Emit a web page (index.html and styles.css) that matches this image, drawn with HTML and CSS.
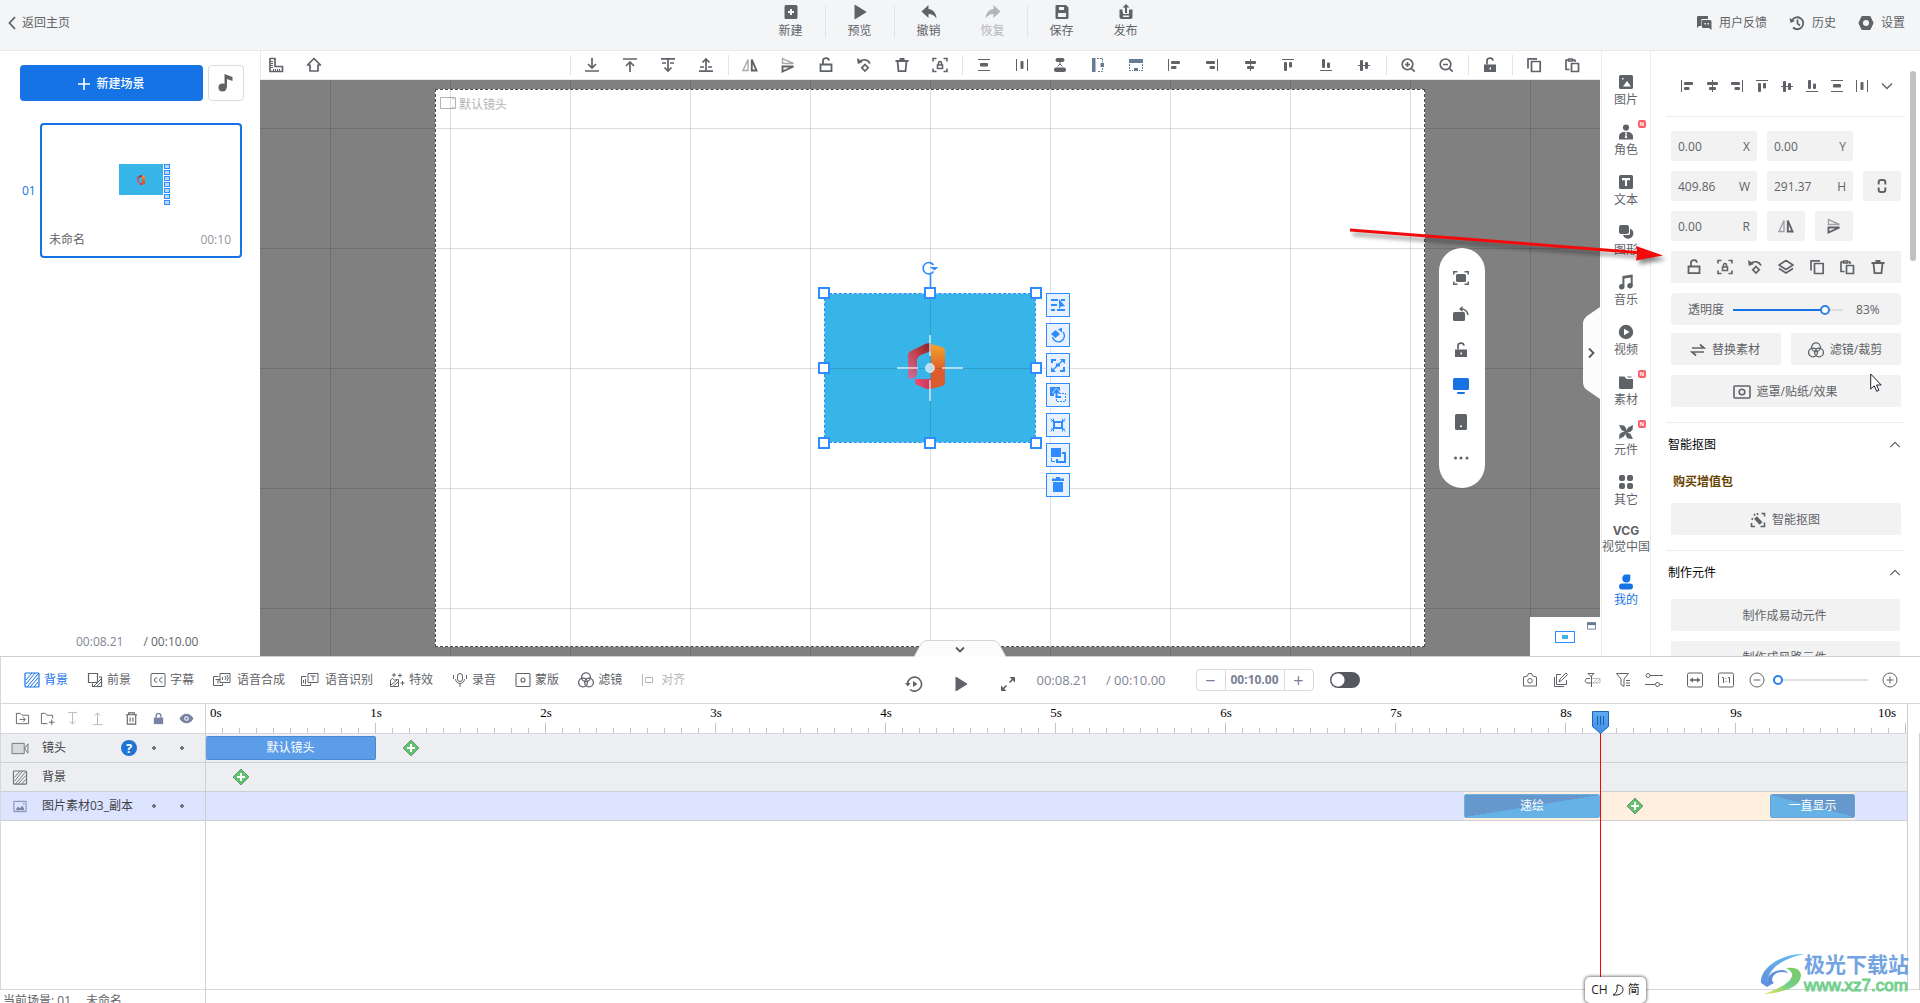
FILE: index.html
```html
<!DOCTYPE html>
<html lang="zh-CN">
<head>
<meta charset="utf-8">
<title>未命名</title>
<link rel="stylesheet" href="styles.css">
</head>
<body>
<svg class="sprite" aria-hidden="true">
  <symbol id="plusbox" viewBox="0 0 16 16"><path fill="currentColor" fill-rule="evenodd" d="M3 1h10a1.500 1.500 0 0 1 1.500 1.500v11A1.500 1.500 0 0 1 13 15H3a1.500 1.500 0 0 1-1.500-1.500v-11A1.500 1.500 0 0 1 3 1zm4 4v2H5v2h2v2h2V9h2V7H9V5z"/></symbol>
  <symbol id="play" viewBox="0 0 16 16"><path fill="currentColor" d="M2.500 1.500v13q0 1 1 .5l10.500-6.500q.6-.5 0-1L3.500 1q-1-.5-1 .5z"/></symbol>
  <symbol id="undo" viewBox="0 0 16 16"><path fill="currentColor" d="M7.500 1v4c5 .5 7.500 4 8 9.500-2-3-4.500-4.500-8-4.500v4L.5 7.500z"/></symbol>
  <symbol id="redo" viewBox="0 0 16 16"><path fill="currentColor" d="M8.500 1v4c-5 .5-7.500 4-8 9.500 2-3 4.500-4.500 8-4.500v4l7-6.500z"/></symbol>
  <symbol id="save" viewBox="0 0 16 16"><path fill="currentColor" fill-rule="evenodd" d="M2.500 1H12l2.500 2.500v10A1.500 1.500 0 0 1 13 15H3a1.500 1.500 0 0 1-1.500-1.500V2A1 1 0 0 1 2.500 1zM5 3v3h5V3zm-1 6v4h8V9z"/></symbol>
  <symbol id="publish" viewBox="0 0 16 16"><path fill="currentColor" fill-rule="evenodd" d="M8 0l3.500 3.500H9V9H7V3.500H4.500zM1.500 5.500h3V8H5v2h6V5.500h3.500V13a2 2 0 0 1-2 2h-9a2 2 0 0 1-2-2zM5 11.500V13h6v-1.500z"/></symbol>
  <symbol id="chat" viewBox="0 0 16 16"><path fill="currentColor" fill-rule="evenodd" d="M2 1h10v3H5.500v7H3l-2 2V2a1 1 0 0 1 1-1zM7 5h7a1.500 1.500 0 0 1 1.500 1.500V15l-2.500-2H7a1 1 0 0 1-1-1V6a1 1 0 0 1 1-1zm1.500 3v1.500H10V8zm3 0v1.500H13V8z"/></symbol>
  <symbol id="history" viewBox="0 0 16 16"><path fill="none" stroke="currentColor" stroke-width="1.800" d="M3.200 5A6 6 0 1 1 4 12.500M8.500 4.500v4l2.500 2"/><path fill="currentColor" d="M.5 3l1 5 4.500-2z"/></symbol>
  <symbol id="gear" viewBox="0 0 16 16"><path fill="currentColor" fill-rule="evenodd" d="M4.500 1h7q.8 0 1.200.7l2.600 5.500q.3.800 0 1.500l-2.600 5.600q-.4.700-1.200.7h-7q-.8 0-1.200-.7L.7 8.700q-.3-.7 0-1.500l2.600-5.500Q3.700 1 4.500 1zM8 5a3 3 0 1 0 0 6 3 3 0 0 0 0-6z"/></symbol>
  <symbol id="note" viewBox="0 0 20 20"><circle cx="6.500" cy="14.500" r="4" fill="currentColor"/><path fill="currentColor" d="M8.500 14.500V1l8 3v4l-5.500-2v8.500z"/></symbol>
  <symbol id="ruler" viewBox="0 0 16 16"><path fill="none" stroke="currentColor" stroke-width="1.700" stroke-linejoin="round" d="M2 1.500h5v8h7.500v5H2z"/><path stroke="currentColor" d="M3 4.500h2M3 6.500h2M3 8.500h2M3 10.500h2M5.500 14v-2M7.500 14v-2M9.500 14v-2M11.500 14v-2"/></symbol>
  <symbol id="home" viewBox="0 0 16 16"><path fill="none" stroke="currentColor" stroke-width="1.700" stroke-linejoin="round" d="M8 1.500L14.500 8H12v6H4V8H1.500z"/></symbol>
  <symbol id="tobottom" viewBox="0 0 16 16"><path fill="none" stroke="currentColor" stroke-width="1.700" d="M8 1v9.500M4 7l4 4 4-4M1 14h14"/></symbol>
  <symbol id="totop" viewBox="0 0 16 16"><path fill="none" stroke="currentColor" stroke-width="1.700" d="M8 15V5.500M4 9l4-4 4 4M1 2h14"/></symbol>
  <symbol id="down1" viewBox="0 0 16 16"><path fill="none" stroke="currentColor" stroke-width="1.700" d="M1 1.800h14M8 2v12M4.500 10.500L8 14l3.500-3.500M2 6h4M10 6h4"/></symbol>
  <symbol id="up1" viewBox="0 0 16 16"><path fill="none" stroke="currentColor" stroke-width="1.700" d="M1 14.200h14M8 14V2M4.500 5.500L8 2l3.500 3.500M2 10h4M10 10h4"/></symbol>
  <symbol id="fliph" viewBox="0 0 16 16"><path fill="none" stroke="currentColor" stroke-width="1.400" opacity=".55" d="M6 2.500v11H1z"/><path fill="none" stroke="currentColor" stroke-width="1.900" d="M9.800 2.500v11h4.700z"/></symbol>
  <symbol id="flipv" viewBox="0 0 16 16"><path fill="none" stroke="currentColor" stroke-width="1.400" opacity=".55" d="M2.500 6.500h11L2.500 1.500z"/><path fill="none" stroke="currentColor" stroke-width="1.900" d="M2.500 9.500h11l-11 5z"/></symbol>
  <symbol id="unlock" viewBox="0 0 16 16"><path fill="none" stroke="currentColor" stroke-width="1.800" d="M2.500 7.500h11v6.700h-11zM5 7.500V4.500a3 3 0 0 1 6-.8"/></symbol>
  <symbol id="unlockf" viewBox="0 0 16 16"><path fill="currentColor" fill-rule="evenodd" d="M2 7.500h12V15H2zm5.500 3v2h1.500v-2z"/><path fill="none" stroke="currentColor" stroke-width="1.700" d="M5 7.500V4.500a3 3 0 0 1 6-.8"/></symbol>
  <symbol id="rot" viewBox="0 0 16 16"><path fill="none" stroke="currentColor" stroke-width="1.700" d="M4 4.500C7 1.500 12 2.500 14 6.500M9 7.500l3.200 3.300L9 14l-3.200-3.200z"/><path fill="currentColor" d="M1 1l.8 6L7 5z"/></symbol>
  <symbol id="trash" viewBox="0 0 16 16"><path fill="none" stroke="currentColor" stroke-width="1.800" d="M1.500 4h13M5.500 2h5M3.500 4l1 10.200h7l1-10.200"/></symbol>
  <symbol id="lockscan" viewBox="0 0 16 16"><path fill="none" stroke="currentColor" stroke-width="1.600" d="M1 4.500V1.500h3.500M11.500 1.500H15v3M15 11.500v3h-3.500M4.500 14.500H1v-3M5.500 8h5v3.500h-5zM6.500 8V6a1.500 1.500 0 0 1 3 0v2"/></symbol>
  <symbol id="distv" viewBox="0 0 16 16"><path stroke="currentColor" d="M2 2.500h12M2 13.500h12"/><rect x="4" y="6" width="8" height="3.500" rx="1" fill="currentColor"/></symbol>
  <symbol id="disth" viewBox="0 0 16 16"><path stroke="currentColor" d="M2.500 2v12M13.500 2v12"/><rect x="6.500" y="4" width="3" height="8" rx="1" fill="currentColor"/></symbol>
  <symbol id="hour" viewBox="0 0 16 16"><rect x="3.500" y="1" width="9" height="4" rx="2" fill="currentColor"/><rect x="2" y="10.500" width="12" height="4.500" rx="2" fill="currentColor"/><path fill="none" stroke="currentColor" d="M5.500 9.500L8 7l2.500 2.500M7 6h2"/></symbol>
  <symbol id="eqh" viewBox="0 0 16 16"><path fill="currentColor" d="M2 1h3.500v14H2zM10.500 6H14v4h-3.500z"/><path fill="none" stroke="currentColor" stroke-dasharray="2 1" d="M7 1.500h5.500M12.500 1.500v4M12.500 11v3.500H7"/></symbol>
  <symbol id="eqw" viewBox="0 0 16 16"><path fill="currentColor" d="M1 2h14v4H1zM6 11h4v3H6z"/><path fill="none" stroke="currentColor" stroke-dasharray="2 1" d="M1.500 7v6.500H5M14.500 7v6.500H11"/></symbol>
  <symbol id="aleft" viewBox="0 0 16 16"><path stroke="currentColor" d="M2.500 2v12"/><rect x="5" y="4" width="9" height="3" rx="1" fill="currentColor"/><rect x="5" y="9" width="5.500" height="3" rx="1" fill="currentColor"/></symbol>
  <symbol id="aright" viewBox="0 0 16 16"><path stroke="currentColor" d="M13.500 2v12"/><rect x="2" y="4" width="9" height="3" rx="1" fill="currentColor"/><rect x="5.500" y="9" width="5.500" height="3" rx="1" fill="currentColor"/></symbol>
  <symbol id="acenter" viewBox="0 0 16 16"><path stroke="currentColor" d="M8.500 2v12"/><rect x="3" y="4" width="11" height="3" rx="1" fill="currentColor"/><rect x="5" y="9" width="7" height="3" rx="1" fill="currentColor"/></symbol>
  <symbol id="atop" viewBox="0 0 16 16"><path stroke="currentColor" d="M2 2.500h12"/><rect x="4" y="5" width="3" height="9" rx="1" fill="currentColor"/><rect x="9" y="5" width="3" height="5.500" rx="1" fill="currentColor"/></symbol>
  <symbol id="abottom" viewBox="0 0 16 16"><path stroke="currentColor" d="M2 13.500h12"/><rect x="4" y="2" width="3" height="9" rx="1" fill="currentColor"/><rect x="9" y="5.500" width="3" height="5.500" rx="1" fill="currentColor"/></symbol>
  <symbol id="amid" viewBox="0 0 16 16"><path stroke="currentColor" d="M2 8.500h12"/><rect x="4" y="3" width="3" height="11" rx="1" fill="currentColor"/><rect x="9" y="5" width="3" height="7" rx="1" fill="currentColor"/></symbol>
  <symbol id="zin" viewBox="0 0 16 16"><path fill="none" stroke="currentColor" stroke-width="1.700" d="M7.500 2a5.300 5.300 0 1 0 0 10.600A5.300 5.300 0 0 0 7.500 2zM11.300 11.300l3.400 3.400M7.500 5v5M5 7.500h5"/></symbol>
  <symbol id="zout" viewBox="0 0 16 16"><path fill="none" stroke="currentColor" stroke-width="1.700" d="M7.500 2a5.300 5.300 0 1 0 0 10.600A5.300 5.300 0 0 0 7.500 2zM11.300 11.300l3.400 3.400M5 7.500h5"/></symbol>
  <symbol id="copy" viewBox="0 0 16 16"><path fill="none" stroke="currentColor" stroke-width="1.700" stroke-linejoin="round" d="M5.500 4.500h8.700v10H5.500zM2 11.500V1.800h9"/></symbol>
  <symbol id="paste" viewBox="0 0 16 16"><path fill="none" stroke="currentColor" stroke-width="1.700" stroke-linejoin="round" d="M5.500 12.500H2V3h2.500M8.500 3H11v2M4.500 2h4v2h-4zM7.500 6.500h7v8h-7z"/></symbol>
  <symbol id="layers" viewBox="0 0 16 16"><path fill="none" stroke="currentColor" stroke-width="1.600" stroke-linejoin="round" d="M8 1.500L15 6l-7 4.500L1 6zM1 9.500L8 14l7-4.500"/></symbol>
  <symbol id="link" viewBox="0 0 16 16"><path fill="none" stroke="currentColor" stroke-width="2" d="M4.700 6.500V4a2 2 0 0 1 2-2h2.600a2 2 0 0 1 2 2v2.500M4.700 9.500V12a2 2 0 0 0 2 2h2.600a2 2 0 0 0 2-2V9.500"/></symbol>
  <symbol id="cdown" viewBox="0 0 16 16"><path fill="none" stroke="currentColor" stroke-width="1.400" d="M3 5.500l5 5 5-5"/></symbol>
  <symbol id="cup" viewBox="0 0 16 16"><path fill="none" stroke="currentColor" stroke-width="1.400" d="M2.500 10.500L8 5l5.500 5.500"/></symbol>
  <symbol id="swap" viewBox="0 0 16 16"><path fill="none" stroke="currentColor" stroke-width="1.700" d="M2 6h12L10 2.500M14 10H2l4 3.500"/></symbol>
  <symbol id="rings" viewBox="0 0 16 16"><g fill="none" stroke="currentColor" stroke-width="1.300"><circle cx="8" cy="5.200" r="4.400"/><circle cx="5" cy="10.500" r="4.400"/><circle cx="11" cy="10.500" r="4.400"/></g></symbol>
  <symbol id="mask" viewBox="0 0 18 14"><g fill="none" stroke="currentColor" stroke-width="1.600"><rect x="1" y="1" width="16" height="12" rx="1"/><circle cx="9" cy="7" r="2.800"/></g></symbol>
  <symbol id="wand" viewBox="0 0 16 16"><path fill="none" stroke="currentColor" stroke-width="1.600" d="M11.500 1.500h3v3M1.500 11v3.500H5M14.500 10.500v4h-4M1.500 6.500L3 7.500M4 2l1 1.500M7.500 1v2"/><path stroke="currentColor" stroke-width="4" d="M5.500 5.500l5.500 6"/></symbol>
  <symbol id="rpic" viewBox="0 0 16 16"><path fill="currentColor" fill-rule="evenodd" d="M2.500 1h11A1.500 1.500 0 0 1 15 2.500v11a1.500 1.500 0 0 1-1.500 1.500h-11A1.500 1.500 0 0 1 1 13.500v-11A1.500 1.500 0 0 1 2.500 1zM4 4v1.500h1.500V4zm1 8.500h8L9 7z"/></symbol>
  <symbol id="rrole" viewBox="0 0 16 16"><circle cx="8" cy="3.600" r="3.100" fill="currentColor"/><path fill="currentColor" fill-rule="evenodd" d="M1 15.500v-3q0-3.500 4-4.500h6q4 1 4 4.500v3zM7 8.500l.5 2.500-.8 3h2.600l-.8-3 .5-2.500z"/></symbol>
  <symbol id="rtext" viewBox="0 0 16 16"><path fill="currentColor" fill-rule="evenodd" d="M2.500 1h11A1.500 1.500 0 0 1 15 2.500v11a1.500 1.500 0 0 1-1.500 1.500h-11A1.500 1.500 0 0 1 1 13.500v-11A1.500 1.500 0 0 1 2.500 1zM4 4v2.200h3V12h2V6.200h3V4z"/></symbol>
  <symbol id="rshape" viewBox="0 0 16 16"><rect x="1" y="1" width="10" height="9" rx="2" fill="currentColor"/><path fill="currentColor" d="M12 4.500a5.300 5.300 0 1 1-7 6.500h5.500a1.500 1.500 0 0 0 1.500-1.500z"/></symbol>
  <symbol id="rmusic" viewBox="0 0 16 16"><g fill="currentColor"><circle cx="3.700" cy="12.700" r="2.700"/><circle cx="12" cy="11.700" r="2.700"/><path d="M4.400 12.700V2l10.300-1.500v11.500h-2V3.500L6.400 4.500v8.200z"/></g></symbol>
  <symbol id="rvideo" viewBox="0 0 16 16"><path fill="currentColor" fill-rule="evenodd" d="M8 .8a7.200 7.200 0 1 0 0 14.400A7.200 7.200 0 0 0 8 .8zM6 4.800l5.500 3.200L6 11.200z"/></symbol>
  <symbol id="rfolder" viewBox="0 0 16 16"><path fill="currentColor" d="M1 2.500h5.500L8.500 5H15v8.500q0 1.500-1.500 1.500h-11Q1 15 1 13.500zM9 2.500h4.500V3.500H9.500z"/></symbol>
  <symbol id="rfan" viewBox="0 0 16 16"><g fill="currentColor"><path d="M8 8.500L3.500 6 1 1l5 .5q3 2.500 2.500 7z"/><path d="M7.500 8L10 3.500 15 1l-.5 5q-2.500 3-7 2.500z"/><path d="M8 7.500l4.500 2.500 2.500 5-5-.5q-3-2.500-2.500-7z"/><path d="M8.500 8L6 12.500 1 15l.5-5q2.500-3 7-2.500z"/></g></symbol>
  <symbol id="rgrid" viewBox="0 0 16 16"><g fill="currentColor"><rect x="1" y="1" width="6" height="6" rx="2"/><rect x="9" y="1" width="6" height="6" rx="2"/><rect x="1" y="9" width="6" height="6" rx="2"/><rect x="9" y="9" width="6" height="6" rx="2"/></g></symbol>
  <symbol id="ruser" viewBox="0 0 16 16"><path fill="currentColor" d="M8 .5h3.500a.8.800 0 0 1 .8.800V4.500A4 4 0 1 1 8 .5z"/><rect x="1" y="9.500" width="14" height="6" rx="3" fill="currentColor"/></symbol>
  <symbol id="fitscr" viewBox="0 0 16 16"><path fill="none" stroke="currentColor" stroke-width="1.500" d="M.8 4.500V1.800H4.500M11.500 1.800h3.700v2.700M15.200 11.500v2.700h-3.700M4.500 14.200H.8v-2.700"/><rect x="3" y="4" width="10" height="8" rx="1.500" fill="currentColor"/></symbol>
  <symbol id="turn" viewBox="0 0 16 16"><rect x="0" y="6" width="12" height="9" rx="1.500" fill="currentColor"/><path fill="none" stroke="currentColor" stroke-width="1.500" d="M8 3q6 0 7 6"/><path fill="currentColor" d="M9.500 0v6L6 3z"/></symbol>
  <symbol id="monitor" viewBox="0 0 16 16"><rect x="0" y="0" width="16" height="12" rx="1.500" fill="currentColor"/><rect x="4" y="14" width="8" height="2" rx="1" fill="currentColor"/></symbol>
  <symbol id="tablet" viewBox="0 0 16 16"><path fill="currentColor" fill-rule="evenodd" d="M3.500 0h9A1.500 1.500 0 0 1 14 1.500v13a1.500 1.500 0 0 1-1.500 1.500h-9A1.500 1.500 0 0 1 2 14.500v-13A1.500 1.500 0 0 1 3.500 0zM7 11.500V13h2v-1.500z"/></symbol>
  <symbol id="more" viewBox="0 0 16 16"><g fill="currentColor"><circle cx="2.500" cy="8" r="1.500"/><circle cx="8" cy="8" r="1.500"/><circle cx="14" cy="8" r="1.500"/></g></symbol>
  <symbol id="o1" viewBox="0 0 16 16"><path stroke="currentColor" stroke-width="2" d="M1 3h7M11 3h4M1 8h6M1 13h4M7 13h8"/><path fill="currentColor" d="M9 2v10l2-2.500 4-.5z"/></symbol>
  <symbol id="o2" viewBox="0 0 16 16"><path fill="none" stroke="currentColor" stroke-width="1.400" d="M13 5a6 6 0 1 1-10.500 5"/><path fill="currentColor" d="M5.500 3l4.500 4L5.500 11 1 7zM8 2.500l4-2V5.500z"/></symbol>
  <symbol id="o3" viewBox="0 0 16 16"><path fill="none" stroke="currentColor" stroke-width="2" d="M2 6V3h4M10 14h4v-4"/><path fill="none" stroke="currentColor" stroke-width="1.300" d="M3 13L13 3"/><path fill="currentColor" d="M10 2h5v5zM1 10v5h5zM6 6.500h4v3H6z"/></symbol>
  <symbol id="o4" viewBox="0 0 16 16"><path fill="currentColor" d="M0 0h10v4L6 1 2 6h2v3H0z"/><path fill="none" stroke="currentColor" stroke-width="2" d="M6.500 3v7H11M4 6l2.500-3L9 6"/><path fill="none" stroke="currentColor" stroke-dasharray="2 1" d="M9 6.500h6.500v8h-9V12"/></symbol>
  <symbol id="o5" viewBox="0 0 16 16"><path fill="none" stroke="currentColor" stroke-width="2" d="M4 5h8v6H4z"/><path fill="none" stroke="currentColor" d="M.5 1.500l2.500 2.500M15.500 1.500L13 4M.5 14.500L3 12M15.500 14.500L13 12M3.500 1.500V4H1M12.500 1.500V4H15M3.500 14.500V12H1M12.500 14.500V12H15"/></symbol>
  <symbol id="o6" viewBox="0 0 16 16"><path fill="currentColor" d="M1 1h10v9H1z"/><path fill="none" stroke="currentColor" stroke-width="2" d="M12 6h3v9H7v-3"/><path fill="none" stroke="currentColor" d="M1.500 11v3.500H5"/></symbol>
  <symbol id="o7" viewBox="0 0 16 16"><path fill="currentColor" d="M6 0h4v1.500h4V4H2V1.500h4zM3 5h10v10H3z"/></symbol>
  <symbol id="hatch" viewBox="0 0 16 16"><rect x="1" y="1" width="14" height="14" rx="1" fill="none" stroke="currentColor" stroke-width="1.200"/><path stroke="currentColor" d="M2 8l6-7M2 12l9-11M3 15L14 2M6 15l8-9M10 15l4-5"/></symbol>
  <symbol id="front" viewBox="0 0 16 16"><path fill="none" stroke="currentColor" stroke-width="1.200" d="M1.500 1.500h9v9h-9zM12 5h2.500v9.500H5.500v-3"/><path stroke="currentColor" d="M7 14l7-7M10 14l4-4"/></symbol>
  <symbol id="cc" viewBox="0 0 16 16"><rect x="1" y="1.500" width="14" height="13" rx="1" fill="none" stroke="currentColor"/><path fill="none" stroke="currentColor" d="M7.300 6a2 2.200 0 1 0 0 4M12.500 6a2 2.200 0 1 0 0 4"/></symbol>
  <symbol id="tts" viewBox="0 0 18 16"><path fill="none" stroke="currentColor" d="M7 1.500h10v9H7zM5.500 4.500h-5v9h9v-2M2.500 7.500h5M5 7.500v4M9.500 5v3M12 4q2 2 0 4M14 3q2.500 3 0 6"/></symbol>
  <symbol id="asr" viewBox="0 0 18 16"><path fill="none" stroke="currentColor" d="M7 1.500h10v9H7zM5.500 4.500h-5v9h9v-2M9.500 4h5M12 4v4.500M2.500 8v3M4.500 7v5"/></symbol>
  <symbol id="fx" viewBox="0 0 16 16"><path fill="none" stroke="currentColor" d="M1.500 14.500V8q2-3 4 0l4-.5v7zM2 13l6-5M4 14.500l5-4.500M5 1v4M3 3h4M11 1.500v4M9 3.500h4M13.500 9v4M11.500 11h4"/></symbol>
  <symbol id="mic" viewBox="0 0 16 16"><path fill="none" stroke="currentColor" d="M8 1.500a2.500 2.500 0 0 1 2.500 2.500v3a2.500 2.500 0 0 1-5 0V4A2.500 2.500 0 0 1 8 1.500zM3.500 7a4.500 4.500 0 0 0 9 0M8 12v3M1.500 3v4M14.500 3v4"/></symbol>
  <symbol id="maskb" viewBox="0 0 16 16"><g fill="none" stroke="currentColor" stroke-width="1.100"><rect x="1" y="1.500" width="14" height="13" rx="1"/><circle cx="8" cy="8" r="2"/></g></symbol>
  <symbol id="alignb" viewBox="0 0 16 16"><path fill="none" stroke="currentColor" d="M1.500 2v12M4.500 5.500h7v5h-7z"/></symbol>
  <symbol id="replay" viewBox="0 0 18 18"><path fill="none" stroke="currentColor" stroke-width="1.600" d="M2.500 9A7 7 0 1 1 5 14.500"/><path fill="currentColor" d="M0 8h5.500L2.700 11.500zM8 6l4.500 3L8 12z"/></symbol>
  <symbol id="expand" viewBox="0 0 16 16"><path fill="none" stroke="currentColor" stroke-width="1.600" d="M9.500 6.500L13 3M6.500 9.500L3 13"/><path fill="currentColor" d="M9.500 1H15v5.500zM1 9.500V15h5.500z"/></symbol>
  <symbol id="camera" viewBox="0 0 16 16"><path fill="none" stroke="currentColor" d="M1.500 5l4-1 1-2.500h3l1 2.500 4 1v9h-13zM8 6.500a2.300 2.300 0 1 0 0 4.600 2.300 2.300 0 0 0 0-4.600z"/></symbol>
  <symbol id="edit" viewBox="0 0 16 16"><path fill="none" stroke="currentColor" d="M8 2.500H3.500v10h10V8M1.500 5v9.500H11M6 10l1-3 6-6 1.500 1.500-6 6z"/></symbol>
  <symbol id="pin" viewBox="0 0 18 16"><path fill="none" stroke="currentColor" d="M5 1.500h6L8.500 4v11M5 1.500L8.500 5M7 6.500H3.500q-3 2 0 4.500H8"/><path opacity=".4" fill="none" stroke="currentColor" d="M9 6.500h8v4.500H9M10 11l4-4M13 11l4-4"/></symbol>
  <symbol id="filter" viewBox="0 0 16 16"><path fill="none" stroke="currentColor" d="M1.500 1.500h12L9 7v7.500l-3-2V7zM11 8.500h4M11 11h4M11 13.500h4"/></symbol>
  <symbol id="tune" viewBox="0 0 18 16"><path fill="none" stroke="currentColor" stroke-width="1.200" d="M5 3.500h13M0 12.500h10M15 12.500h3"/><circle cx="3" cy="3.500" r="2" fill="none" stroke="currentColor"/><circle cx="12.500" cy="12.500" r="2" fill="none" stroke="currentColor"/></symbol>
  <symbol id="fitw" viewBox="0 0 18 16"><rect x="1.500" y="1" width="15" height="14" rx="1.500" fill="none" stroke="currentColor"/><path stroke="currentColor" stroke-width="1.500" d="M6 8h6"/><path fill="currentColor" d="M3.500 8L7 5.500v5zM14.500 8L11 5.500v5z"/></symbol>
  <symbol id="one" viewBox="0 0 18 16"><rect x="1.500" y="1" width="15" height="14" rx="1.500" fill="none" stroke="currentColor"/><path fill="none" stroke="currentColor" d="M5 5.500h1.500V11M11 5.500h1.500V11M9 6v1M9 9v1"/></symbol>
  <symbol id="cminus" viewBox="0 0 16 16"><circle cx="8" cy="8" r="7" fill="none" stroke="currentColor"/><path stroke="currentColor" d="M4.500 8h7"/></symbol>
  <symbol id="cplus" viewBox="0 0 16 16"><circle cx="8" cy="8" r="7" fill="none" stroke="currentColor"/><path stroke="currentColor" d="M4.500 8h7M8 4.500v7"/></symbol>
  <symbol id="fin" viewBox="0 0 16 16"><path fill="none" stroke="currentColor" d="M1.500 13.500v-11h4l2 2h7v9zM5 9h5.500M8.500 6.500L11 9l-2.500 2.500"/></symbol>
  <symbol id="fadd" viewBox="0 0 16 16"><path fill="none" stroke="currentColor" d="M8 13.500H1.500v-11h4l2 2h6V8M12.500 9v6M9.500 12h6"/></symbol>
  <symbol id="tdown" viewBox="0 0 16 16"><path fill="none" stroke="currentColor" d="M3 1.500h10M8 2v12M5 11l3 3 3-3"/></symbol>
  <symbol id="tup" viewBox="0 0 16 16"><path fill="none" stroke="currentColor" d="M3 14.500h10M8 14V2M5 5l3-3 3 3"/></symbol>
  <symbol id="ttrash" viewBox="0 0 16 16"><path fill="none" stroke="currentColor" stroke-width="1.200" d="M2 4h12M5 4V2h6v2M3.500 4v10h9V4M6.500 7v4.500M9.500 7v4.500"/></symbol>
  <symbol id="tlock" viewBox="0 0 16 16"><path fill="currentColor" d="M3 7h10v7H3z"/><path fill="none" stroke="currentColor" stroke-width="1.500" d="M5.500 7V5a2.500 2.500 0 0 1 5 0v2"/></symbol>
  <symbol id="eye" viewBox="0 0 16 16"><path fill="currentColor" fill-rule="evenodd" d="M.5 8Q3.500 3 8 3t7.500 5Q12.500 13 8 13T.5 8zM8 5.500a2.500 2.500 0 1 0 0 5 2.500 2.500 0 0 0 0-5z"/><circle cx="8" cy="8" r="1.300" fill="currentColor"/></symbol>
  <symbol id="video" viewBox="0 0 18 16"><path fill="#d8d9db" stroke="currentColor" d="M.5 2.500h13v11H.5z"/><path fill="none" stroke="currentColor" d="M14 8l3.500-5v10z"/></symbol>
  <symbol id="pic" viewBox="0 0 16 16"><path fill="none" stroke="currentColor" d="M1.500 2.500h13v11h-13z"/><path fill="currentColor" d="M3 12l3-4 2 2 2.500-3L13 12zM11 4.500h2v1h-2z"/></symbol>
  <symbol id="key" viewBox="0 0 18 18"><path fill="#5fc26c" stroke="#6f9a75" d="M9 1l8 8-8 8-8-8z"/><path stroke="#fff" stroke-width="2" d="M9 5v8M5 9h8"/></symbol>
  <symbol id="office" viewBox="0 0 37 46">
    <path fill="url(#og1)" d="M0 12Q0 10 2 8.500L17 1q3-1 6-1v8L13 12q-4 2-4 5v13q0 4-4 5.500L0 36z"/>
    <path fill="url(#og2)" d="M23 1l11 3q3 1 3 4v31q0 3-3 4L23 46z"/>
    <path fill="url(#og3)" d="M7 36h16v10h-4L8 41.500q-1.500-3-1-5.500z"/>
  </symbol>
  <defs>
    <linearGradient id="og1" x1="1" y1="0" x2="0" y2="1"><stop offset="0" stop-color="#7c2529"/><stop offset=".5" stop-color="#c8414c"/><stop offset="1" stop-color="#c774a8"/></linearGradient>
    <linearGradient id="og2" x1="0" y1="0" x2="0" y2="1"><stop offset="0" stop-color="#f5a52c"/><stop offset=".6" stop-color="#dc5b2c"/></linearGradient>
    <linearGradient id="og3"><stop offset="0" stop-color="#f04b6e"/><stop offset="1" stop-color="#c4385a"/></linearGradient>
    <linearGradient id="wm1" x1="0" y1="1" x2="1" y2="0"><stop offset="0" stop-color="#5d8fdc"/><stop offset="1" stop-color="#66c2ee"/></linearGradient>
    <linearGradient id="wm2" x1="0" y1="1" x2="1" y2="0"><stop offset="0" stop-color="#f0e14f"/><stop offset=".5" stop-color="#6fcf8a"/><stop offset="1" stop-color="#7fca5f"/></linearGradient>
    <linearGradient id="ph" x1="0" y1="0" x2="0" y2="1"><stop offset="0" stop-color="#5eaaf4"/><stop offset="1" stop-color="#3f8fe6"/></linearGradient>
  </defs>
</svg>

<header class="topbar">
  <a class="back" href="#"><svg viewBox="0 0 8 14"><path d="M7 1L1.500 7 7 13" fill="none" stroke="currentColor" stroke-width="1.800"/></svg>返回主页</a>
  <nav class="actions">
    <button><svg><use href="#plusbox"/></svg>新建</button><i class="vsep"></i>
    <button><svg><use href="#play"/></svg>预览</button><i class="vsep"></i>
    <button><svg><use href="#undo"/></svg>撤销</button>
    <button class="off" disabled><svg><use href="#redo"/></svg>恢复</button><i class="vsep"></i>
    <button><svg><use href="#save"/></svg>保存</button>
    <button><svg><use href="#publish"/></svg>发布</button>
  </nav>
  <nav class="account">
    <a href="#"><svg><use href="#chat"/></svg>用户反馈</a>
    <a href="#"><svg><use href="#history"/></svg>历史</a>
    <a href="#"><svg><use href="#gear"/></svg>设置</a>
  </nav>
</header>

<main class="workspace">
  <aside class="scenes">
    <div class="scene-actions">
      <button class="new-scene"><svg viewBox="0 0 12 12"><path d="M6 0v12M0 6h12" stroke="#fff" stroke-width="1.600"/></svg>新建场景</button>
      <button class="music" aria-label="音乐"><svg><use href="#note"/></svg></button>
    </div>
    <div class="scene">
      <span class="scene-no">01</span>
      <div class="card">
        <div class="thumb">
          <div class="thumb-img"><svg><use href="#office"/></svg></div>
          <div class="thumb-ops"><i></i><i></i><i></i><i></i><i></i><i></i><i></i></div>
        </div>
        <div class="card-foot"><span>未命名</span><time>00:10</time></div>
      </div>
    </div>
    <p class="scene-time"><span>00:08.21</span><b>/ 00:10.00</b></p>
  </aside>

  <section class="editor">
    <div class="toolbar">
      <button><svg><use href="#ruler"/></svg></button>
      <button><svg><use href="#home"/></svg></button>
      <i class="tsep push"></i>
      <button><svg><use href="#tobottom"/></svg></button>
      <button><svg><use href="#totop"/></svg></button>
      <button><svg><use href="#down1"/></svg></button>
      <button><svg><use href="#up1"/></svg></button>
      <i class="tsep"></i>
      <button><svg><use href="#fliph"/></svg></button>
      <button><svg><use href="#flipv"/></svg></button>
      <button><svg><use href="#unlock"/></svg></button>
      <button><svg><use href="#rot"/></svg></button>
      <button><svg><use href="#trash"/></svg></button>
      <button><svg><use href="#lockscan"/></svg></button>
      <i class="tsep"></i>
      <button><svg><use href="#distv"/></svg></button>
      <button><svg><use href="#disth"/></svg></button>
      <button><svg><use href="#hour"/></svg></button>
      <button class="slate"><svg><use href="#eqh"/></svg></button>
      <button class="slate"><svg><use href="#eqw"/></svg></button>
      <button><svg><use href="#aleft"/></svg></button>
      <button><svg><use href="#aright"/></svg></button>
      <button><svg><use href="#acenter"/></svg></button>
      <button><svg><use href="#atop"/></svg></button>
      <button><svg><use href="#abottom"/></svg></button>
      <button><svg><use href="#amid"/></svg></button>
      <i class="tsep"></i>
      <button><svg><use href="#zin"/></svg></button>
      <button><svg><use href="#zout"/></svg></button>
      <i class="tsep"></i>
      <button><svg><use href="#unlockf"/></svg></button>
      <i class="tsep"></i>
      <button><svg><use href="#copy"/></svg></button>
      <button><svg><use href="#paste"/></svg></button>
    </div>
    <div class="canvas">
      <div class="stage">
        <span class="cam"><svg viewBox="0 0 16 12"><path d="M.5.5h15v11H.5zM12 2l3-1.500M12 10l3 1.500" fill="none" stroke="currentColor"/></svg>默认镜头</span>
        <div class="image">
          <svg class="logo"><use href="#office"/></svg>
        </div>
      </div>
      <div class="gridlines"></div>
      <div class="selection">
        <svg class="cross" viewBox="0 0 66 66"><path d="M33 0v21M33 45v21M0 33h21M45 33h21" stroke="#fff" stroke-opacity=".6" stroke-width="2"/><circle cx="33" cy="33" r="4.500" fill="#cdeaf8" fill-opacity=".85" stroke="#fff" stroke-opacity=".6"/></svg>
        <svg class="rotate" viewBox="0 0 18 26"><path d="M12.500 4A5.700 5.700 0 1 0 12.500 10.500M9.500 13v13" fill="none" stroke="#2f8cff" stroke-width="1.600"/><path d="M8.500 6h9l-4 3.500z" fill="#2f8cff"/></svg>
        <i class="h nw"></i><i class="h n"></i><i class="h ne"></i><i class="h w"></i><i class="h e"></i><i class="h sw"></i><i class="h s"></i><i class="h se"></i>
        <div class="ops">
          <button><svg><use href="#o1"/></svg></button>
          <button><svg><use href="#o2"/></svg></button>
          <button><svg><use href="#o3"/></svg></button>
          <button><svg><use href="#o4"/></svg></button>
          <button><svg><use href="#o5"/></svg></button>
          <button><svg><use href="#o6"/></svg></button>
          <button><svg><use href="#o7"/></svg></button>
        </div>
      </div>
      <div class="viewpill">
        <button><svg><use href="#fitscr"/></svg></button>
        <button><svg><use href="#turn"/></svg></button>
        <button><svg><use href="#unlockf"/></svg></button>
        <button class="on"><svg><use href="#monitor"/></svg></button>
        <button><svg><use href="#tablet"/></svg></button>
        <button><svg><use href="#more"/></svg></button>
      </div>
      <button class="fold-right" aria-label="收起"><svg viewBox="0 0 17 92"><path d="M17 0v92L4 83q-4-3-4-8V17q0-5 4-8z" fill="#fcfcfc"/><path d="M6 41.500l4.500 4.500L6 50.500" fill="none" stroke="#55585d" stroke-width="1.800"/></svg></button>
      <div class="minimap"><i class="mm-view"><i></i></i><svg viewBox="0 0 10 8"><path d="M.5.500h9v7h-9z" fill="none" stroke="#667a94"/><path d="M0 0h10v3H0z" fill="#667a94"/></svg></div>
    </div>
  </section>

  <nav class="rail">
    <button><svg><use href="#rpic"/></svg>图片</button>
    <button><svg><use href="#rrole"/></svg>角色<em>N</em></button>
    <button><svg><use href="#rtext"/></svg>文本</button>
    <button><svg><use href="#rshape"/></svg>图形</button>
    <button><svg><use href="#rmusic"/></svg>音乐</button>
    <button><svg><use href="#rvideo"/></svg>视频</button>
    <button><svg><use href="#rfolder"/></svg>素材<em>N</em></button>
    <button><svg><use href="#rfan"/></svg>元件<em>N</em></button>
    <button><svg><use href="#rgrid"/></svg>其它</button>
    <button class="vcg"><strong>VCG</strong>视觉中国</button>
    <button class="on"><svg><use href="#ruser"/></svg>我的</button>
  </nav>

  <aside class="props">
    <div class="align-row">
      <button><svg><use href="#aleft"/></svg></button>
      <button><svg><use href="#acenter"/></svg></button>
      <button><svg><use href="#aright"/></svg></button>
      <button><svg><use href="#atop"/></svg></button>
      <button><svg><use href="#amid"/></svg></button>
      <button><svg><use href="#abottom"/></svg></button>
      <button><svg><use href="#distv"/></svg></button>
      <button><svg><use href="#disth"/></svg></button>
      <button><svg><use href="#cdown"/></svg></button>
    </div>
    <div class="block">
      <div class="fields">
        <label><input value="0.00">X</label>
        <label><input value="0.00">Y</label>
        <i></i>
        <label><input value="409.86">W</label>
        <label><input value="291.37">H</label>
        <button><svg><use href="#link"/></svg></button>
        <label><input value="0.00">R</label>
        <div class="flips">
          <button><svg><use href="#fliph"/></svg></button>
          <button><svg><use href="#flipv"/></svg></button>
        </div>
      </div>
      <div class="quick">
        <button><svg><use href="#unlock"/></svg></button>
        <button><svg><use href="#lockscan"/></svg></button>
        <button><svg><use href="#rot"/></svg></button>
        <button><svg><use href="#layers"/></svg></button>
        <button><svg><use href="#copy"/></svg></button>
        <button><svg><use href="#paste"/></svg></button>
        <button><svg><use href="#trash"/></svg></button>
      </div>
      <div class="opacity">
        <label for="op">透明度</label>
        <input class="slider" type="range" id="op" min="0" max="100" value="87">
        <output for="op">83%</output>
      </div>
      <div class="pair">
        <button class="wide"><svg><use href="#swap"/></svg>替换素材</button>
        <button class="wide"><svg><use href="#rings"/></svg>滤镜/裁剪</button>
      </div>
      <button class="wide"><svg class="w18"><use href="#mask"/></svg>遮罩/贴纸/效果</button>
    </div>
    <section class="group">
      <h2>智能抠图<svg><use href="#cup"/></svg></h2>
      <a class="buy" href="#">购买增值包</a>
      <button class="wide"><svg><use href="#wand"/></svg>智能抠图</button>
    </section>
    <section class="group">
      <h2>制作元件<svg><use href="#cup"/></svg></h2>
      <button class="wide gap">制作成易动元件</button>
      <button class="wide gap">制作成风路元件</button>
    </section>
    <i class="thumb-scroll"></i>
  </aside>
</main>

<section class="timeline">
  <button class="fold-down" aria-label="收起"><svg viewBox="0 0 92 17"><path d="M0 17L7 4q2-3.500 6-3.500h66q4 0 6 3.500l7 13z" fill="#fcfcfc" stroke="#d6d6d6"/><path d="M42 7.500l4 4 4-4" fill="none" stroke="#55585d" stroke-width="1.800"/><path d="M1 16.500h90" stroke="#fcfcfc"/></svg></button>
  <div class="tl-bar">
    <div class="tabs">
      <button class="on"><svg><use href="#hatch"/></svg>背景</button>
      <button><svg><use href="#front"/></svg>前景</button>
      <button><svg><use href="#cc"/></svg>字幕</button>
      <button class="voice"><svg><use href="#tts"/></svg>语音合成</button>
      <button class="voice"><svg><use href="#asr"/></svg>语音识别</button>
      <button><svg><use href="#fx"/></svg>特效</button>
      <button><svg><use href="#mic"/></svg>录音</button>
      <button><svg><use href="#maskb"/></svg>蒙版</button>
      <button><svg><use href="#rings"/></svg>滤镜</button>
      <button class="off" disabled><svg><use href="#alignb"/></svg>对齐</button>
    </div>
    <div class="transport">
      <button><svg class="w18"><use href="#replay"/></svg></button>
      <button><svg><use href="#play"/></svg></button>
      <button><svg><use href="#expand"/></svg></button>
    </div>
    <div class="clock"><span>00:08.21</span><span>/ 00:10.00</span></div>
    <div class="stepper"><button>−</button><input value="00:10.00" aria-label="时长"><button>+</button></div>
    <input class="toggle" type="checkbox" aria-label="切换">
    <div class="zoomer">
      <button><svg><use href="#camera"/></svg></button>
      <button><svg><use href="#edit"/></svg></button>
      <button><svg class="w18"><use href="#pin"/></svg></button>
      <button><svg><use href="#filter"/></svg></button>
      <button><svg class="w18"><use href="#tune"/></svg></button>
      <button class="after"><svg class="w18"><use href="#fitw"/></svg></button>
      <button><svg class="w18"><use href="#one"/></svg></button>
      <button><svg><use href="#cminus"/></svg></button>
      <input class="slider plain" type="range" min="0" max="100" value="0" aria-label="缩放">
      <button><svg><use href="#cplus"/></svg></button>
    </div>
  </div>

  <div class="tl-body">
    <div class="heads">
      <div class="head-tools">
        <button><svg><use href="#fin"/></svg></button>
        <button><svg><use href="#fadd"/></svg></button>
        <button class="off"><svg><use href="#tdown"/></svg></button>
        <button class="off"><svg><use href="#tup"/></svg></button>
        <button class="bin"><svg><use href="#ttrash"/></svg></button>
        <button class="blue"><svg><use href="#tlock"/></svg></button>
        <button class="blue"><svg><use href="#eye"/></svg></button>
      </div>
      <div class="row"><svg class="w18"><use href="#video"/></svg><span>镜头</span><b class="help">?</b><i class="dot"></i><i class="dot"></i></div>
      <div class="row"><svg><use href="#hatch"/></svg><span>背景</span></div>
      <div class="row sel"><svg class="blue"><use href="#pic"/></svg><span>图片素材03_副本</span><i class="dot"></i><i class="dot"></i></div>
    </div>
    <div class="tracks">
      <div class="ruler"><span>0s</span><span>1s</span><span>2s</span><span>3s</span><span>4s</span><span>5s</span><span>6s</span><span>7s</span><span>8s</span><span>9s</span><span>10s</span></div>
      <div class="track"><div class="clip cam-clip">默认镜头</div><svg class="key at1"><use href="#key"/></svg></div>
      <div class="track"><svg class="key at0"><use href="#key"/></svg></div>
      <div class="track sel"><i class="span"></i><div class="clip draw-clip">速绘</div><svg class="key at8"><use href="#key"/></svg><div class="clip show-clip">一直显示</div></div>
      <div class="playhead"><svg viewBox="0 0 17 23"><path d="M.5.500h16v15L8.500 22.500l-8-7z" fill="url(#ph)" stroke="#1f66b5"/><path d="M5.500 5v9M8.500 5v9M11.500 5v9" stroke="#1f5fa8"/></svg></div>
    </div>
    <div class="tl-scroll"></div>
  </div>
  <footer class="status">当前场景: 01&emsp;&nbsp;未命名</footer>
</section>

<svg class="arrow" viewBox="0 0 330 60"><path d="M10 7.500L297 30l-1-5 27 9.500L296 39.500l1-6.500L10 10.500z" fill="#f30b0b"/></svg>
<svg class="cursor" viewBox="0 0 12 19"><path d="M.7 1v15l3.500-3.200 2.500 5.500 2.200-1-2.400-5.300h4.700z" fill="#fff" stroke="#223"/></svg>
<div class="ime">CH <svg viewBox="0 0 12 12"><path d="M5 1q6 0 6 4.500T5 11H1q5-2 4-10z" fill="none" stroke="currentColor"/></svg> 简</div>
<div class="mark">
  <svg viewBox="0 0 44 42"><path d="M44 1Q30 0 16 8 0 18 1 30l6 4Q6 22 16 13 26 5 44 1z" fill="url(#wm1)"/><path d="M7 34q-2-12 9-16 9-3 12 2-9-3-14 2-4 5 0 8-4 2-7 4z" fill="#5d8fdc"/><path d="M26 15q14-2 15 7 0 9-12 14-11 4-25 5 14-5 20-9 9-6 8-11-1-4-6-6z" fill="url(#wm2)"/></svg>
  <div><strong>极光下载站</strong><span>www.xz7.com</span></div>
</div>
</body>
</html>
```
FILE: styles.css
```css
* { box-sizing: border-box; }
body {
  margin: 0;
  height: 100vh;
  display: grid;
  grid-template-rows: 51px minmax(0, 605fr) minmax(0, 347fr);
  overflow: hidden;
  position: relative;
  background: #fff;
  color: #5f6368;
  font: 12px/16px "Open Sans", "Noto Sans CJK SC", sans-serif;
}
button, input { font: inherit; color: inherit; border: 0; background: none; padding: 0; margin: 0; }
a { color: inherit; text-decoration: none; }
i, em { font-style: normal; display: block; }
svg { width: 16px; height: 16px; flex: none; display: block; }
svg.w18 { width: 18px; }
.sprite { position: absolute; width: 0; height: 0; }
.off { color: #b4b6b9; }

/* top bar */
.topbar {
  display: grid;
  grid-template-columns: 1fr auto 1fr;
  background: #f4f5f7;
  border-bottom: 1px solid #e8e8e9;
}
.back { display: flex; align-items: center; gap: 6px; padding: 0 0 5px 8px; }
.back svg { width: 8px; height: 14px; }
.actions { display: flex; align-items: flex-start; padding: 4px 4px 0 0; }
.actions button { width: 64px; display: flex; flex-direction: column; align-items: center; gap: 3px; }
.vsep { width: 1px; height: 32px; margin: 2px 2px; background: #e3e4e6; }
.account { display: flex; justify-content: flex-end; align-items: center; gap: 22px; padding: 0 15px 5px 0; }
.account a { display: flex; gap: 7px; align-items: center; }

.workspace { display: grid; grid-template-columns: 260px minmax(0, 1fr) 51px 269px; min-height: 0; }

/* scenes */
.scenes { display: flex; flex-direction: column; padding: 14px 16px 6px 20px; }
.scene-actions { display: flex; gap: 5px; }
.new-scene {
  flex: 1; height: 36px; border-radius: 4px; background: #1573e6; color: #fff; font-weight: 500;
  display: flex; align-items: center; justify-content: center; gap: 6px; padding-top: 1px;
}
.new-scene svg { width: 12px; height: 12px; }
.music { width: 36px; height: 36px; border: 1px solid #dadce2; border-radius: 4px; display: grid; place-items: center; }
.music svg { width: 20px; height: 20px; }
.scene { display: flex; align-items: center; margin: 22px 2px 0; gap: 5px; }
.scene-no { width: 13px; color: #1573e6; }
.card { flex: 1; height: 135px; border: 2px solid #1573e6; border-radius: 4px; display: flex; flex-direction: column; }
.thumb { flex: 1; display: flex; padding: 39px 0 0 77px; gap: 1px; }
.thumb-img { width: 44px; height: 31px; background: #37b5e9; display: grid; place-items: center; }
.thumb-img svg { width: 8px; height: 10px; }
.thumb-ops { display: flex; flex-direction: column; gap: 1px; }
.thumb-ops i { width: 6px; height: 5px; border: 1px solid #2f8cff; background: #bcd8ff; }
.card-foot { display: flex; justify-content: space-between; padding: 0 9px 8px 7px; }
.card-foot time { color: #95979b; }
.scene-time { margin: auto 0 0 56px; display: flex; gap: 20px; color: #7f8595; }
.scene-time b { font-weight: 400; color: #5f6368; }

/* editor */
.editor { display: flex; flex-direction: column; min-width: 0; }
.toolbar { display: flex; height: 29px; align-items: center; padding-right: 9px; border-left: 1px solid #e8e8e9; border-bottom: 1px solid #e8e8e9; }
.toolbar button { flex: 0 1 38px; display: grid; place-items: center; height: 26px; }
.toolbar button svg { width: 16px; height: 16px; }
.toolbar .slate { color: #667a94; }
.toolbar button:first-child { flex-basis: 30px; margin-right: 4px; }
.tsep { width: 1px; height: 20px; background: #e3e4e6; margin: 0 2px 0 3px; }
.push { margin-left: auto; }
.canvas { flex: 1; position: relative; background: #808080; display: grid; place-items: center; min-height: 0; overflow: hidden; }
.stage {
  height: calc(100% - 18px); aspect-ratio: 990 / 558; grid-area: 1 / 1;
  background: #fff; border: 1px dashed #4c4c4c; display: grid; place-items: center;
}
.cam { grid-area: 1 / 1; place-self: start; display: flex; gap: 3px; padding: 7px 0 0 4px; color: #b4b4b4; }
.cam svg { width: 16px; height: 12px; }
.image { grid-area: 1 / 1; width: 212px; height: 150px; background: #37b5e9; outline: 1px solid #d5ecfb; outline-offset: -1px; display: grid; place-items: center; }
.image .logo { width: 37px; height: 46px; margin-right: 7px; margin-top: -4px; }
.gridlines {
  position: absolute; inset: 0;
  background-image:
    linear-gradient(90deg, transparent 60px, rgba(0,0,0,.13) 60px 61px, transparent 61px),
    linear-gradient(transparent 60px, rgba(0,0,0,.13) 60px 61px, transparent 61px);
  background-size: 120px 120px; background-position: center;
}
.selection { grid-area: 1 / 1; position: relative; width: 212px; height: 150px; outline: 1px dashed #2f8cff; outline-offset: -1px; display: grid; place-items: center; }
.cross { width: 66px; height: 66px; }
.rotate { position: absolute; left: 97px; top: -32px; width: 18px; height: 26px; }
.h { position: absolute; width: 12px; height: 12px; margin: -6px; border: 2px solid #2f8cff; background: #fff; }
.nw, .w, .sw { left: 0; } .n, .s { left: 50%; } .ne, .e, .se { left: 100%; }
.nw, .n, .ne { top: 0; } .w, .e { top: 50%; } .sw, .s, .se { top: 100%; }
.ops { position: absolute; left: 222px; top: 0; display: flex; flex-direction: column; gap: 6px; }
.ops button { width: 24px; height: 24px; border: 1px solid #2f8cff; background: #e8f1ff; color: #2f8cff; display: grid; place-items: center; }
.viewpill {
  position: absolute; right: 115px; top: 168px; width: 46px; height: 240px; border-radius: 23px; background: #fff;
  display: flex; flex-direction: column; align-items: center; padding: 12px 2px 12px 0;
}
.viewpill button { flex: 1; display: grid; place-items: center; }
.on { color: #1573e6; }
.fold-right { position: absolute; right: 0; top: 227px; }
.fold-right svg { width: 17px; height: 92px; }
.minimap { position: absolute; right: 0; bottom: 0; width: 70px; height: 39px; background: #fff; display: flex; align-items: flex-start; gap: 12px; padding: 5px 4px 0 25px; }
.mm-view { flex: none; width: 20px; height: 12px; margin-top: 9px; border: 1px solid #2f8cff; display: grid; place-items: center; }
.mm-view i { width: 6px; height: 4px; background: #37b5e9; }
.minimap svg { width: 9px; height: 8px; }

/* rail */
.rail { display: flex; flex-direction: column; padding-top: 15px; border-left: 1px solid #ececec; border-right: 1px solid #ececec; margin-left: 1px; }
.rail button { position: relative; height: 50px; display: flex; flex-direction: column; align-items: center; gap: 2px; padding-top: 8px; white-space: nowrap; }
.rail em {
  position: absolute; right: 4px; top: 4px; width: 8px; height: 8px; border-radius: 2px;
  background: #f9616a; color: #fff; font: bold 6px/8px "Liberation Sans", sans-serif; text-align: center;
}
.vcg strong { font: bold 12px/14px Inter, sans-serif; }
.rail .vcg { gap: 1px; }

/* properties */
.props { position: relative; padding: 0 15px; overflow: hidden; }
.align-row { height: 66px; display: flex; padding: 22px 6px 0 8px; border-bottom: 1px solid #ececec; }
.align-row button { flex: 1; height: 26px; display: grid; place-items: center; }
.block, .group { display: flex; flex-direction: column; gap: 10px; padding: 14px 4px 15px 5px; border-bottom: 1px solid #ececec; }
.fields { display: grid; grid-template-columns: 86px 86px 38px; gap: 10px; }
.fields label { display: flex; align-items: center; justify-content: space-between; height: 30px; padding: 1px 7px 0; background: #f2f2f2; border-radius: 2px; }
.fields input { width: 50px; }
.fields button { width: 38px; height: 30px; background: #f2f2f2; border-radius: 2px; display: grid; place-items: center; }
.flips { display: flex; gap: 10px; }
.quick { height: 32px; display: flex; padding: 0 8px; background: #f2f2f2; }
.quick button { flex: 1; display: grid; place-items: center; }
.opacity { height: 32px; margin-bottom: -2px; display: flex; align-items: center; padding: 1px 17px 0; background: #f2f2f2; border-radius: 4px; }
.opacity .slider { width: 110px; margin: 0 13px 0 9px; }
.slider { appearance: none; height: 12px; background: linear-gradient(90deg, #1573e6 84%, #dcdcdc 84%) center / 100% 2px no-repeat; }
.slider::-webkit-slider-thumb { appearance: none; width: 10px; height: 10px; border: 2px solid #2f80ea; border-radius: 50%; background: #fff; }
.plain { width: 95px; background-image: linear-gradient(#dfe0e3, #dfe0e3); }
.pair { display: grid; grid-template-columns: 1fr 1fr; gap: 10px; }
.wide { height: 32px; flex: none; background: #f2f2f2; border-radius: 2px; display: flex; align-items: center; justify-content: center; gap: 6px; padding: 1px 2px 0 0; }
.wide .w18 { height: 14px; }
.group { padding-top: 0; gap: 0; }
.group:last-of-type { border: 0; }
h2 { margin: 0 0 0 -3px; height: 44px; display: flex; align-items: center; justify-content: space-between; font: inherit; color: #000; }
h2 svg { width: 14px; height: 14px; color: #5f6368; margin-right: -1px; }
.buy { margin: 7px 2px 13px; color: #6a4300; font-weight: 700; }
.gap { margin: 4px 1px 6px 0; }
.thumb-scroll { position: absolute; right: 4px; top: 20px; width: 6px; height: 190px; border-radius: 3px; background: #c1c1c1; }

/* timeline */
.timeline { position: relative; display: flex; flex-direction: column; border-top: 1px solid #cfd0d3; min-height: 0; }
.fold-down { position: absolute; left: calc(50% - 46px); top: -17px; }
.fold-down svg { width: 92px; height: 17px; }
.tl-bar { position: relative; flex: 0 0 47px; display: flex; align-items: center; border-bottom: 1px solid #d6d8dd; border-left: 1px solid #d6d8dd; padding: 0 22px 1px; }
.tabs { display: flex; flex: none; }
.tabs button { display: flex; align-items: center; gap: 5px; margin-right: 19px; }
.tabs svg { margin-right: -1px; }
.tabs svg { width: 16px; }
.tabs .voice { gap: 6px; margin-right: 16px; }
.tabs .voice svg { width: 18px; margin-right: 0; }
.tabs button:first-child { margin-left: 1px; }
.transport { display: flex; position: absolute; left: calc(50% - 70px); top: 14px; }
.transport button { width: 47px; height: 26px; display: grid; place-items: center; }
.transport .w18 { height: 18px; }
.clock { display: flex; gap: 18px; font-size: 13px; color: #7f8595; position: absolute; left: calc(50% + 76px); }
.stepper { position: absolute; left: calc(50% + 235px); display: flex; width: 118px; height: 22px; border: 1px solid #dadada; border-radius: 4px; color: #7a8194; }
.stepper button { width: 28px; font-size: 18px; line-height: 18px; }
.stepper input { flex: 1; width: 10px; text-align: center; font-weight: 700; border: solid #dadada; border-width: 0 1px; }
.toggle { position: absolute; left: calc(50% + 369px); appearance: none; width: 30px; height: 16px; border-radius: 8px; background: radial-gradient(circle at 8px 8px, #fff 6px, #55585e 7px); }
.zoomer { display: flex; align-items: center; margin-left: auto; }
.zoomer button { width: 31px; height: 26px; display: grid; place-items: center; }
.zoomer .after { margin-left: 10px; }
.zoomer .slider { margin: 0 6px 0 1px; }
.zoomer button:last-child { width: 31px; margin-right: -7px; }

.tl-body { flex: 1; min-height: 0; display: grid; grid-template-columns: 206px minmax(0, 1fr) 12px; border-bottom: 1px solid #d6d8dd; }
.heads { border-left: 1px solid #d6d8dd; border-right: 1px solid #cfcfcf; }
.head-tools { height: 30px; display: flex; align-items: center; padding-left: 9px; border-bottom: 1px solid #d6d8dd; }
.head-tools button { width: 25px; display: grid; place-items: center; }
.head-tools svg { width: 15px; height: 15px; }
.head-tools .bin { margin-left: 9px; }
.head-tools .blue { width: 28px; }
.blue { color: #7783a0; }
.row { height: 29px; display: flex; align-items: center; padding: 0 9px 0 10px; background: #edeef2; border-bottom: 1px solid #cfd0d3; color: #404246; }
.row > svg { color: #6f7277; width: 18px; height: 15px; }
.row > svg.blue { color: #7783a0; }
.row span { margin: 0 auto 0 13px; }
.row .dot { width: 28px; height: 4px; background: radial-gradient(circle, #75777b 2px, transparent 2px); }
.help { width: 16px; height: 16px; margin-right: 3px; border-radius: 50%; background: #1f74d4; color: #fff; text-align: center; font: bold 13px/16px "Open Sans", sans-serif; }
.row.sel, .track.sel { background: #dde4ff; }
.tracks { position: relative; overflow: hidden; border-right: 1px solid #cfcfcf; }
.ruler {
  height: 30px; display: grid; grid-template-columns: repeat(11, 170px); border-bottom: 1px solid #d6d8dd;
  font: 13px/18px "Liberation Serif", serif; color: #000;
  background:
    repeating-linear-gradient(90deg, transparent 0 169px, #c4c4c4 169px 170px) bottom / 100% 10px no-repeat,
    repeating-linear-gradient(90deg, transparent 0 16px, #c4c4c4 16px 17px) bottom / 100% 5px no-repeat;
}
.ruler span { justify-self: start; transform: translateX(-50%); }
.ruler span:first-child { transform: translateX(4px); }
.ruler span:last-child { transform: translateX(-28px); }
.track { height: 29px; display: grid; grid-template-columns: repeat(100, 17px); align-items: center; background: #edeef2; border-bottom: 1px solid #cfd0d3; }
.track > * { grid-row: 1; }
.clip { height: 24px; line-height: 22px; text-align: center; color: #fff; border: 1px solid #4689cf; border-radius: 2px; }
.cam-clip { grid-column: 1 / 11; background: #5b9de8; border-left: 0; }
.span { grid-column: 75 / 98; height: 28px; background: #ffefdf; }
.draw-clip { grid-column: 75 / 83; border-color: #66b2e7; background: linear-gradient(to bottom right, #6598cc 50%, #66b2e7 50%); }
.show-clip { grid-column: 93 / 98; border-color: #66a4d9; background: linear-gradient(to top right, #66b2e7 50%, #6598cc 50%); }
.key { width: 18px; height: 18px; margin-left: 26px; }
.at1 { grid-column: 11; } .at0 { grid-column: 1; } .at8 { grid-column: 83; }
.playhead { position: absolute; left: 1394px; top: 7px; bottom: 0; width: 1px; background: #f00; }
.playhead svg { width: 17px; height: 23px; margin-left: -8px; }
.tl-scroll { margin-top: 29px; border-right: 1px solid #cfcfcf; }
.status {
  flex: 0 0 13px; overflow: hidden; padding-left: 3px; line-height: 21px; color: #5f6368;
  background: linear-gradient(#cfcfcf, #cfcfcf) 205px 0 / 1px 100% no-repeat;
}

/* overlays */
.arrow { position: absolute; right: 250px; top: 221px; width: 330px; height: 60px; filter: drop-shadow(3px 4px 2px rgba(0,0,0,.45)); }
.cursor { position: absolute; right: 38px; top: 373px; width: 12px; height: 19px; }
.ime {
  position: absolute; right: 274px; bottom: 0; width: 61px; height: 26px; border-radius: 5px; background: #fff;
  box-shadow: 0 0 3px 1px rgba(0,0,0,.5); display: flex; align-items: center; justify-content: center; gap: 4px; color: #222;
}
.ime svg { width: 12px; height: 12px; }
.mark { position: absolute; right: 11px; bottom: 7px; display: flex; align-items: center; }
.mark svg { width: 44px; height: 42px; }
.mark strong, .mark span { display: block; }
.mark strong { font-size: 21px; line-height: 24px; color: #72a3e2; }
.mark span { font: 17px/20px "Liberation Sans", sans-serif; color: #74cf8e; -webkit-text-stroke: 1px #74cf8e; }
```
